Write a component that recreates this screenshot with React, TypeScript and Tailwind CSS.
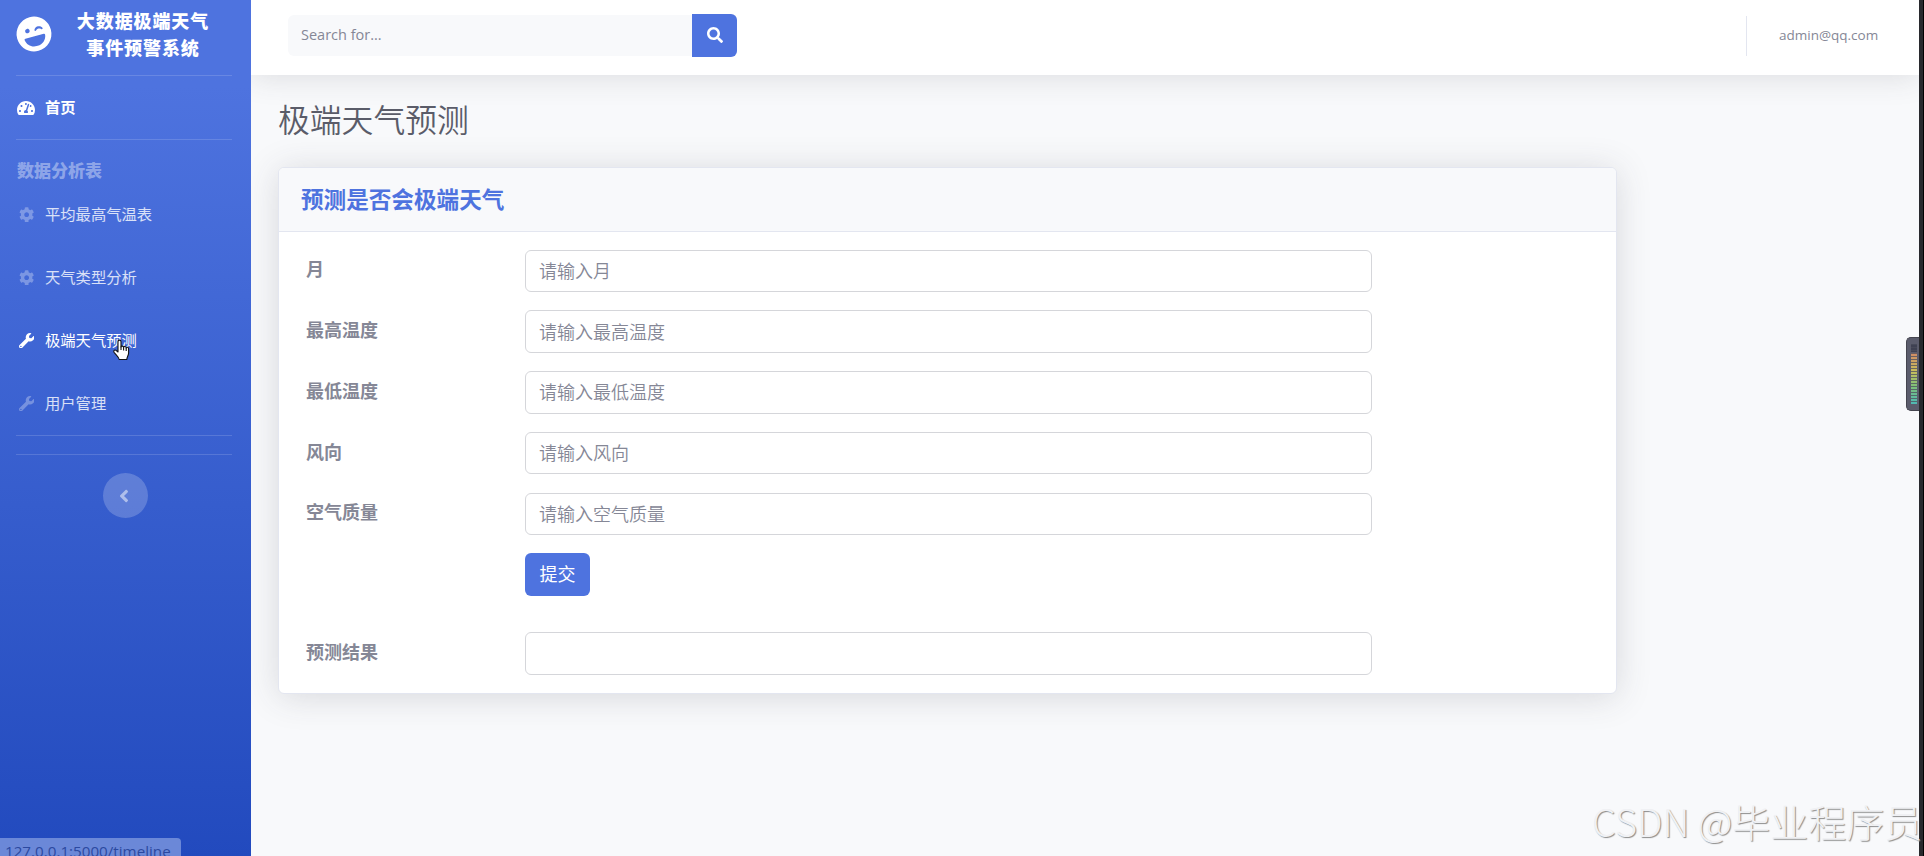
import React from 'react';
import { FaAngleLeft, FaCog, FaLaughWink, FaSearch, FaTachometerAlt, FaWrench } from 'react-icons/fa';

interface NavItemProps {
    icon: React.ReactNode;
    label: string;
    active?: boolean;
}

interface FieldRowProps {
    label: string;
    placeholder?: string;
}

const navItems: NavItemProps[] = [
    { icon: <FaCog />, label: '平均最高气温表' },
    { icon: <FaCog />, label: '天气类型分析' },
    { icon: <FaWrench />, label: '极端天气预测', active: true },
    { icon: <FaWrench />, label: '用户管理' },
];

const fields: FieldRowProps[] = [
    { label: '月', placeholder: '请输入月' },
    { label: '最高温度', placeholder: '请输入最高温度' },
    { label: '最低温度', placeholder: '请输入最低温度' },
    { label: '风向', placeholder: '请输入风向' },
    { label: '空气质量', placeholder: '请输入空气质量' },
];

const Divider: React.FC = () => <hr className="ml-4 mr-[19px] h-px border-0 bg-white/15" />;

const NavItem: React.FC<NavItemProps> = ({ icon, label, active }) => {
    return (
        <a
            href="#"
            className={`flex h-[63px] items-center pl-[18px] text-[15.3px] ${active ? 'text-white' : 'text-white/80'}`}
        >
            <span className={`mr-[10px] flex w-[17px] justify-center ${active ? 'text-white' : 'text-white/30'}`}>
                {icon}
            </span>
            {label}
        </a>
    );
};

const Sidebar: React.FC = () => {
    return (
        <aside className="flex w-[251px] shrink-0 flex-col bg-linear-to-b from-[#4e73df] from-10% to-[#224abe]">
            <div className="flex h-[75px] items-start pl-4 text-white">
                <FaLaughWink className="mt-[16px] size-[36px] shrink-0 -rotate-15" />
                <div className="ml-[23px] mt-[8px] w-[136px] text-center text-[18px] font-extrabold leading-[27px] tracking-[0.9px]">
                    大数据极端天气
                    <br />
                    事件预警系统
                </div>
            </div>
            <Divider />
            <a href="#" className="flex h-[63px] items-center pl-[17px] text-[15.3px] font-bold text-white">
                <FaTachometerAlt className="mr-[10px] size-[18px]" />
                首页
            </a>
            <Divider />
            <div className="mt-[18px] h-[25px] pl-[17px] text-[17px] font-extrabold leading-[25px] text-white/40">
                数据分析表
            </div>
            <nav className="h-[252px]">
                {navItems.map((item) => (
                    <NavItem key={item.label} {...item} />
                ))}
            </nav>
            <Divider />
            <div className="h-[18px]" />
            <Divider />
            <button className="mx-auto mt-[18px] flex size-[45px] items-center justify-center rounded-full bg-white/20 pr-[3px] text-white/50">
                <FaAngleLeft className="size-[20px]" />
            </button>
        </aside>
    );
};

const Topbar: React.FC = () => {
    return (
        <header className="relative flex h-[75px] items-center justify-between bg-white pb-[4px] pl-[37px] shadow-[0_2px_30px_rgba(58,59,69,0.15)]">
            <form className="flex h-[43px] items-center">
                <input
                    className="h-[41px] w-[404px] rounded-l-md bg-[#f8f9fb] px-[13px] pb-[3px] text-[14.5px] placeholder:text-[#858796]"
                    placeholder="Search for..."
                />
                <button
                    type="button"
                    className="flex h-[43px] w-[45px] items-center justify-center rounded-r-md bg-[#4e73df] pb-[2px] text-white"
                >
                    <FaSearch className="size-[16px]" />
                </button>
            </form>
            <div className="flex h-[40px] items-center border-l border-[#e3e6f0] pl-[32px] pr-[40px]">
                <span className="w-[100px] whitespace-nowrap text-[13.5px] text-[#858796]">admin@qq.com</span>
            </div>
        </header>
    );
};

const FieldRow: React.FC<FieldRowProps> = ({ label, placeholder }) => {
    return (
        <div className="flex h-[42.5px] items-center">
            <label className="w-[219px] shrink-0 pb-[2px] text-[18px] font-bold text-[#858796]">{label}</label>
            <input
                className="h-full w-[847px] rounded-[6px] border border-[#d5d6da] bg-white px-[13px] text-[18px] font-[350] placeholder:text-[#858796]"
                placeholder={placeholder}
            />
        </div>
    );
};

const PredictCard: React.FC = () => {
    return (
        <section className="mt-[28px] h-[527px] w-[1339px] overflow-hidden rounded-[6px] border border-[#e3e6f0] bg-white shadow-[0_3px_34px_rgba(58,59,69,0.17)]">
            <div className="flex h-[64px] items-center border-b border-[#e3e6f0] bg-[#f8f9fb] pl-[22px]">
                <h2 className="text-[22.6px] font-bold text-[#4e73df]">预测是否会极端天气</h2>
            </div>
            <div className="pl-[27px] pt-[17.5px]">
                <div className="flex flex-col gap-[18.3px]">
                    {fields.map((field) => (
                        <FieldRow key={field.label} {...field} />
                    ))}
                </div>
                <button className="ml-[219px] mt-[18px] flex h-[43px] w-[65px] items-center justify-center rounded-[6px] bg-[#4e73df] text-[18px] text-white">
                    提交
                </button>
                <div className="mt-[36px]">
                    <FieldRow label="预测结果" />
                </div>
            </div>
        </section>
    );
};

const LevelMeter: React.FC = () => {
    return (
        <div className="absolute right-[5px] top-[337px] h-[74px] w-[13px] rounded-l-[5px] border border-r-0 border-[#45454f] bg-[#5b5c6c]">
            <svg className="absolute left-[4px] top-[6px]" width="6" height="60" viewBox="0 0 6 60">
                <defs>
                    <linearGradient id="level" x1="0" y1="0" x2="0" y2="1">
                        <stop offset="0" stopColor="#d08a66" />
                        <stop offset="0.35" stopColor="#c9bd5c" />
                        <stop offset="0.65" stopColor="#7fbf78" />
                        <stop offset="1" stopColor="#4fb9b4" />
                    </linearGradient>
                </defs>
                <rect width="6" height="8" fill="#3f4152" />
                <rect y="9" width="6" height="51" fill="url(#level)" />
                <path d="M3 0V60" stroke="#4c4e5c" strokeWidth="6" strokeDasharray="1 2" strokeOpacity="0.75" />
            </svg>
        </div>
    );
};

const PointerCursor: React.FC = () => {
    return (
        <svg className="absolute left-[112px] top-[339px]" width="18" height="22" viewBox="0 0 18 22">
            <path
                d="M6 13V2.7C6 .6 9 .6 9 2.7V8c0-1.3 2.6-1.2 2.6.4 0-1.3 2.6-1.1 2.6.6 0-1.2 2.4-1 2.4.8V14c0 2.4-1.6 3.5-1.8 6.5H7.2C6.8 17.8 4 16 2 13.2 1 11.5 3 10.3 4.3 11.5Z"
                fill="#fff"
                stroke="#111"
                strokeWidth="1.1"
                strokeLinejoin="round"
            />
            <path d="M9 7.5V11M11.6 8.5V11.5M14.2 9V12" stroke="#111" strokeWidth="1.1" />
        </svg>
    );
};

const App: React.FC = () => {
    return (
        <div className="relative flex h-[856px] w-[1924px] overflow-hidden bg-[#f8f9fb] font-['Open_Sans','Noto_Sans_CJK_SC',sans-serif]">
            <Sidebar />
            <div className="flex min-w-0 flex-1 flex-col overflow-hidden">
                <Topbar />
                <main className="pl-[27px] pt-[25px]">
                    <h1 className="h-[39px] text-[31.8px] font-[350] leading-[39px] text-[#5a5c69]">极端天气预测</h1>
                    <PredictCard />
                </main>
            </div>
            <div className="w-[5px] shrink-0 border-r border-black bg-[#28292d]" />

            <LevelMeter />
            <PointerCursor />
            <div className="absolute left-0 top-[838px] h-[24px] w-[181px] rounded-tr-[4px] bg-[#6b88d8] pl-[5px] text-[15.2px] leading-[27px] text-[#2b49a0]">
                127.0.0.1:5000/timeline
            </div>
            <div className="absolute left-[1592px] top-[793px] whitespace-nowrap font-['Noto_Sans_CJK_SC',sans-serif] text-[38px] font-light leading-[56px] text-[#f0f1f4] [text-shadow:1px_1px_1px_#8c8c8c]">
                CSDN @毕业程序员
            </div>
        </div>
    );
};

export default App;
